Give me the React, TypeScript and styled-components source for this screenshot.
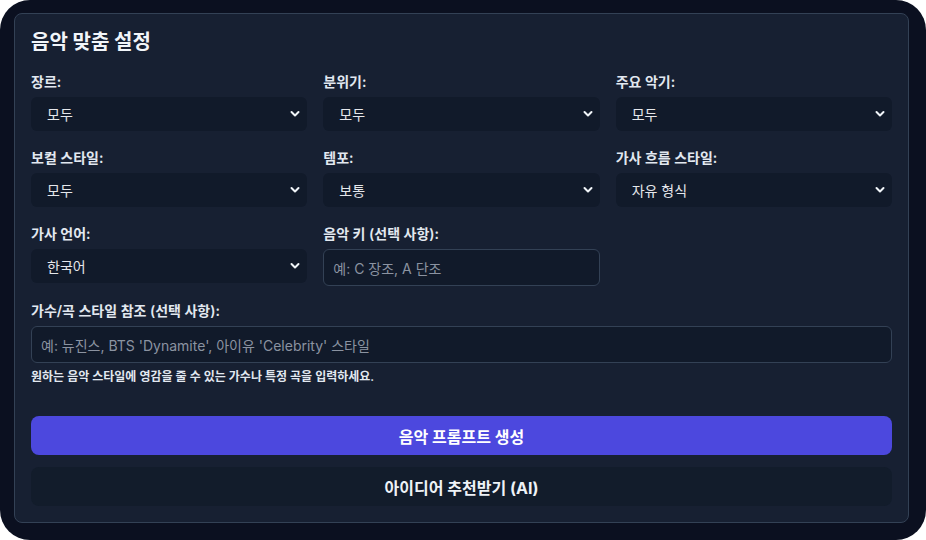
import React from "react";
import styled, { createGlobalStyle } from "styled-components";

const Global = createGlobalStyle`
  html, body {
    margin: 0;
    padding: 0;
    background: #ffffff;
  }
  body {
    font-family: Inter, "Noto Sans CJK KR", "Noto Sans", sans-serif;
  }
`;

const Frame = styled.div`
  width: 926px;
  height: 540px;
  box-sizing: border-box;
  background: #0b1020;
  border-radius: 30px;
  padding: 13px 17px 17px 14px;
`;

const Card = styled.div`
  height: 100%;
  box-sizing: border-box;
  background: #172032;
  border: 1px solid #334155;
  border-radius: 8px;
  padding: 14px 16px 16px 16px;
  display: flex;
  flex-direction: column;
`;

const Title = styled.h2`
  margin: 0 0 15px 0;
  font-size: 20px;
  line-height: 28px;
  font-weight: 700;
  color: #f1f5f9;
`;

const Grid = styled.div`
  display: grid;
  grid-template-columns: repeat(3, 1fr);
  column-gap: 16px;
  row-gap: 17px;
  margin-top: 1px;
`;

const Field = styled.div`
  display: flex;
  flex-direction: column;
`;

const Label = styled.label`
  font-size: 14px;
  line-height: 20px;
  font-weight: 600;
  color: #e2e8f0;
  margin-bottom: 5px;
`;

const SelectBox = styled.div`
  position: relative;
  height: 34px;
  border-radius: 6px;
  background: #111a2a;
  display: flex;
  align-items: center;
  padding: 0 16px;
  font-size: 14px;
  color: #e5e7eb;
`;

const Chevron = styled.svg`
  position: absolute;
  right: 7px;
  top: 12px;
`;

const TextInput = styled.div`
  box-sizing: border-box;
  height: 37px;
  border: 1px solid #334155;
  border-radius: 6px;
  background: #111a2a;
  display: flex;
  align-items: center;
  padding: 0 9px;
  font-size: 14px;
  color: #8b93a1;
`;

const Wide = styled(Field)`
  margin-top: 15px;
`;

const Help = styled.p`
  margin: 6px 0 0 0;
  font-size: 12px;
  line-height: 16px;
  font-weight: 600;
  color: #e2e8f0;
`;

const Button = styled.button<{ $primary?: boolean }>`
  height: 40px;
  border: none;
  border-radius: 8px;
  background: ${(p) => (p.$primary ? "#4c48de" : "#121c2b")};
  color: ${(p) => (p.$primary ? "#ffffff" : "#eef2f7")};
  font-family: inherit;
  font-size: 16px;
  font-weight: 700;
  margin-top: ${(p) => (p.$primary ? "31px" : "12px")};
`;

function Select({ value }: { value: string }) {
  return (
    <SelectBox>
      {value}
      <Chevron width="10" height="10" viewBox="0 0 10 10">
        <path
          d="M1.5 3 L5 6.5 L8.5 3"
          stroke="#f1f5f9"
          strokeWidth="2"
          fill="none"
          strokeLinecap="round"
          strokeLinejoin="round"
        />
      </Chevron>
    </SelectBox>
  );
}

const fields = [
  { label: "장르:", value: "모두" },
  { label: "분위기:", value: "모두" },
  { label: "주요 악기:", value: "모두" },
  { label: "보컬 스타일:", value: "모두" },
  { label: "템포:", value: "보통" },
  { label: "가사 흐름 스타일:", value: "자유 형식" },
  { label: "가사 언어:", value: "한국어" },
];

export default function App() {
  return (
    <>
      <Global />
      <Frame>
        <Card>
          <Title>음악 맞춤 설정</Title>
          <Grid>
            {fields.map((f, i) => (
              <Field key={i}>
                <Label>{f.label}</Label>
                <Select value={f.value} />
              </Field>
            ))}
            <Field>
              <Label>음악 키 (선택 사항):</Label>
              <TextInput>예: C 장조, A 단조</TextInput>
            </Field>
          </Grid>
          <Wide>
            <Label>가수/곡 스타일 참조 (선택 사항):</Label>
            <TextInput>예: 뉴진스, BTS 'Dynamite', 아이유 'Celebrity' 스타일</TextInput>
            <Help>원하는 음악 스타일에 영감을 줄 수 있는 가수나 특정 곡을 입력하세요.</Help>
          </Wide>
          <Button $primary>음악 프롬프트 생성</Button>
          <Button>아이디어 추천받기 (AI)</Button>
        </Card>
      </Frame>
    </>
  );
}
